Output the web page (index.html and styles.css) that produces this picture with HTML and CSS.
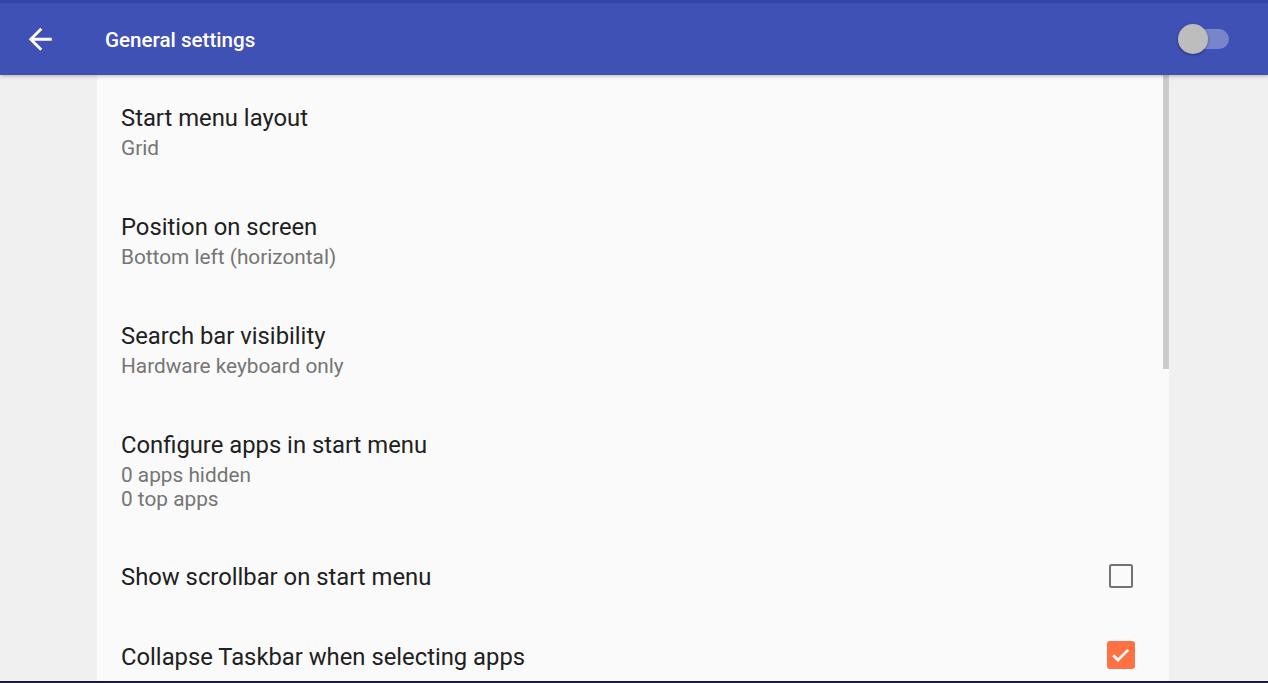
FILE: index.html
```html
<!DOCTYPE html>
<html lang="en">
<head>
<meta charset="utf-8">
<title>General settings</title>
<link rel="stylesheet" href="styles.css">
</head>
<body>
<div class="page">
  <header class="appbar">
    <div class="statusstrip"></div>
    <div class="toolbar">
      <button class="back" aria-label="Back">
        <svg class="back-icon" viewBox="0 0 24 24" width="34.5" height="34.5"><path fill="#ffffff" d="M20 11H7.83l5.59-5.59L12 4l-8 8 8 8 1.41-1.41L7.83 13H20v-2z"/></svg>
      </button>
      <h1 class="title">General settings</h1>
      <div class="switch">
        <span class="switch-track"></span>
        <span class="switch-thumb"></span>
      </div>
    </div>
  </header>
  <main class="main">
    <section class="panel">
      <div class="scrollbar"></div>
      <div class="pref">
        <div class="pref-text">
          <div class="pref-title">Start menu layout</div>
          <div class="pref-summary">Grid</div>
        </div>
      </div>
      <div class="pref">
        <div class="pref-text">
          <div class="pref-title">Position on screen</div>
          <div class="pref-summary">Bottom left (horizontal)</div>
        </div>
      </div>
      <div class="pref">
        <div class="pref-text">
          <div class="pref-title">Search bar visibility</div>
          <div class="pref-summary">Hardware keyboard only</div>
        </div>
      </div>
      <div class="pref">
        <div class="pref-text">
          <div class="pref-title">Configure apps in start menu</div>
          <div class="pref-summary">0 apps hidden<br>0 top apps</div>
        </div>
      </div>
      <div class="pref pref-single">
        <div class="pref-text">
          <div class="pref-title">Show scrollbar on start menu</div>
        </div>
        <span class="checkbox"></span>
      </div>
      <div class="pref pref-single">
        <div class="pref-text">
          <div class="pref-title">Collapse Taskbar when selecting apps</div>
        </div>
        <span class="checkbox checked">
          <svg viewBox="0 0 24 24" width="28" height="28"><path fill="none" stroke="#ffffff" stroke-width="2.3" d="M5.3 12.2l4.1 4.1 8.7-8.7"/></svg>
        </span>
      </div>
    </section>
  </main>
  <div class="frame-bottom"></div>
</div>
</body>
</html>
```

FILE: styles.css
```css
html, body {
  margin: 0;
  padding: 0;
}
body {
  background: #f0f0f0;
  font-family: Roboto, "Noto Sans", "Liberation Sans", sans-serif;
  overflow: hidden;
}
.page {
  height: 683px;
  display: flex;
  flex-direction: column;
  overflow: hidden;
}
.appbar {
  position: relative;
  z-index: 2;
  flex: 0 0 auto;
  box-shadow: 0 1px 4px rgba(0, 0, 0, 0.28);
}
.statusstrip {
  height: 3px;
  background: #3443a4;
}
.toolbar {
  height: 72px;
  background: #3f51b5;
  display: flex;
  align-items: center;
}
.back {
  border: 0;
  background: transparent;
  padding: 0;
  margin: 0 0 0 23px;
  width: 34.5px;
  height: 34.5px;
  display: flex;
  align-items: center;
  justify-content: center;
}
.back-icon {
  display: block;
}
.title {
  margin: 2px 0 0 47.5px;
  color: #ffffff;
  font-size: 20.6px;
  font-weight: 500;
  line-height: 28px;
  flex: 1;
}
.switch {
  position: relative;
  width: 52px;
  height: 30px;
  margin-right: 38px;
}
.switch-track {
  position: absolute;
  left: 2px;
  top: 5px;
  width: 49px;
  height: 20px;
  border-radius: 10px;
  background: rgba(255, 255, 255, 0.3);
}
.switch-thumb {
  position: absolute;
  left: 0;
  top: 0;
  width: 30px;
  height: 30px;
  border-radius: 50%;
  background: #bdbdbd;
  box-shadow: 0 1px 3px rgba(0, 0, 0, 0.35);
}
.main {
  flex: 1;
  display: flex;
  justify-content: center;
  padding-right: 2px;
  min-height: 0;
}
.panel {
  position: relative;
  width: 1072px;
  background: #fafafa;
  overflow: hidden;
}
.scrollbar {
  position: absolute;
  right: 0;
  top: 0;
  width: 6px;
  height: 294px;
  background: #cccccc;
}
.pref {
  display: flex;
  align-items: center;
  padding: 29px 34px 24px 24px;
}
.pref-single {
  padding-top: 28px;
  padding-bottom: 22px;
}
.pref-text {
  flex: 1;
}
.pref-title {
  font-size: 23.8px;
  line-height: 28px;
  color: #212121;
}
.pref-summary {
  margin-top: 4px;
  font-size: 20.8px;
  line-height: 24px;
  color: #757575;
}
.checkbox {
  width: 20px;
  height: 20px;
  border: 2.5px solid #737373;
  border-radius: 2.5px;
  margin: 0 2px 3px 0;
  display: flex;
  align-items: center;
  justify-content: center;
}
.checkbox.checked {
  width: 28px;
  height: 28px;
  border: 0;
  border-radius: 3px;
  background: #ff7043;
  margin-right: 0;
}
.checkbox svg {
  display: block;
}
.frame-bottom {
  height: 2px;
  background: #1c1b3f;
  flex: 0 0 auto;
}
```
